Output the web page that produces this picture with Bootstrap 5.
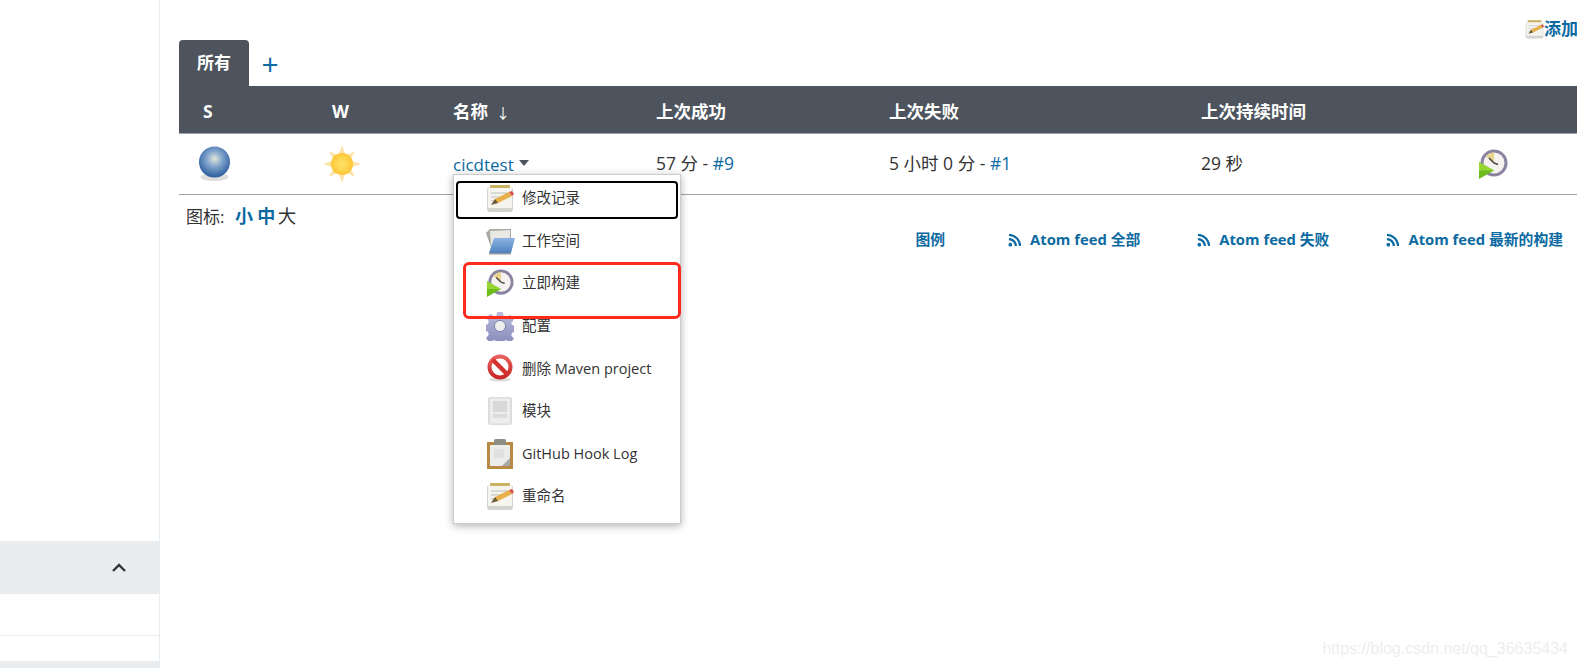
<!DOCTYPE html>
<html lang="zh-CN">
<head>
    <meta charset="UTF-8">
    <title>Jenkins</title>
    <link href="https://cdn.jsdelivr.net/npm/bootstrap@5.3.0/dist/css/bootstrap.min.css" rel="stylesheet">
    <style>
        html, body { height: 668px; overflow: hidden; }
        body { font-family: "Open Sans", "Noto Sans CJK SC", sans-serif; font-size: 17px; color: #333; background: #fff; }
        a { color: #0b6aa2; text-decoration: none; }
        .side-panel { width: 160px; height: 668px; border-right: 1px solid #e9edf0; overflow: hidden; }
        .side-gap { height: 541px; }
        .side-head { height: 53px; background: #e9edf0; padding-right: 32px; }
        .side-row { height: 42px; border-bottom: 1px solid #e9edf0; }
        .side-gap2 { height: 25px; }
        .side-head2 { height: 10px; background: #e9edf0; }
        .main-panel { width: 1417px; padding-left: 19px; position: relative; }
        .desc-row { height: 40px; margin-right: -35px; padding-top: 17px; line-height: 22px; font-weight: 700; }
        .desc-row a { white-space: nowrap; }
        .view-tabs { height: 46px; }
        .view-tab { width: 70px; background: #4d545d; color: #fff; font-weight: 700; border-radius: 4px 4px 0 0; }
        .view-add { width: 42px; font-size: 30px; font-weight: 400; line-height: 44px; padding-top: 2px; }
        .job-table { width: 1398px; table-layout: fixed; margin: 0; }
        .col-s { width: 129px; } .col-w { width: 121px; } .col-name { width: 203px; } .col-ok { width: 233px; }
        .col-fail { width: 312px; } .col-time { width: 277px; } .col-run { width: 123px; }
        .job-table th { background: #4d545d; color: #fff; height: 47px; padding: 3px 0 0 24px; vertical-align: middle; border-bottom: 1px solid #9aa5ab; font-weight: 700; font-size: 17.500px; }
        .job-table td { height: 61px; padding: 0 0 0 24px; vertical-align: middle; border-bottom: 1px solid #9aa5ab; color: #333; font-size: 17.500px; }
        .job-table td.ball-cell { padding-left: 19px; }
        .job-table td.sun-cell { padding-left: 15px; }
        .job-table td.name-cell { padding-top: 2px; font-size: 17px; }
        .sort-arrow { margin-left: 8px; font-weight: 400; font-size: 14px; color: #fff; }
        .caret-mark { display: inline-block; margin-left: 1px; vertical-align: 5px; border-top: 6px solid #4d545d; border-left: 5.500px solid transparent; border-right: 5.500px solid transparent; }
        .icon-sizes { padding: 8px 0 0 7px; line-height: 26px; height: 31px; }
        .icon-sizes a { font-size: 18px; }
        .icon-sizes a:first-child { margin-left: 6px; }
        .icon-sizes .size-plain { font-size: 18.500px; margin-left: -2px; }
        .feed-row { padding-right: 14px; gap: 57px; font-size: 14.800px; font-weight: 700; height: 26px; margin-top: 1px; }
        .feed-row a { white-space: nowrap; }
        .feed-row a:first-child { margin-right: 6px; }
        .feed-row svg { margin-right: 9px; vertical-align: -2px; }
        .job-menu { display: block; position: absolute; left: 293px; top: 174px; width: 228px; height: 350px; padding: 6px 2px 0; margin: 0; border: 1px solid #ccc; border-radius: 0; box-shadow: 0 2px 8px rgba(0,0,0,.3); font-size: 14.500px; z-index: 5; }
        .job-menu .dropdown-item { height: 38px; margin-bottom: 4.600px; padding: 0 0 4px 28px; gap: 8px; color: #333; border-radius: 4px; border: 2px solid transparent; }
        .job-menu .dropdown-item.is-focus { border-color: #000; }
        .job-menu .icon-wide { margin: 0 -1px; }
        .red-mark { position: absolute; left: 303px; top: 262px; width: 218px; height: 57px; border: 3.500px solid #ff2a1c; border-radius: 6px; z-index: 6; pointer-events: none; }
        .watermark { position: absolute; right: 9px; bottom: 7px; font-family: "Liberation Sans", sans-serif; font-size: 16px; color: #eee; z-index: 1; }
    </style>
</head>
<body>
<svg width="0" height="0" class="position-absolute">
    <defs>
        <radialGradient id="ballGrad" cx="50%" cy="40%" r="58%">
            <stop offset="0" stop-color="#e2e6da"/><stop offset=".45" stop-color="#7fa3cc"/><stop offset="1" stop-color="#2f5f9f"/>
        </radialGradient>
        <radialGradient id="sunGrad" cx="50%" cy="50%" r="50%">
            <stop offset="0" stop-color="#ffe36a"/><stop offset="1" stop-color="#fdc637"/>
        </radialGradient>
        <linearGradient id="folderGrad" x1="0" y1="0" x2="0" y2="1">
            <stop offset="0" stop-color="#8db4e2"/><stop offset="1" stop-color="#4f82c0"/>
        </linearGradient>
        <linearGradient id="gearGrad" x1="0" y1="0" x2="0" y2="1">
            <stop offset="0" stop-color="#b9bcdc"/><stop offset="1" stop-color="#8489b8"/>
        </linearGradient>
        <linearGradient id="stopGrad" x1="0" y1="0" x2="0" y2="1">
            <stop offset="0" stop-color="#e8605c"/><stop offset="1" stop-color="#c8272a"/>
        </linearGradient>
        <symbol id="i-note" viewBox="0 0 28 28">
            <rect x="1" y="3" width="26" height="25" rx="3" fill="#d4d4cf"/>
            <rect x="2" y="3" width="24" height="21" rx="1" fill="#f5f4ee"/>
            <rect x="4" y="1" width="20" height="3" fill="#c9b264"/>
            <path d="M5 9h17M5 13h12M5 17h7" stroke="#d0d0d0" stroke-width="1.300"/>
            <path d="M7 19l2-4L23 8l3 4-14 7z" fill="#e8b04a"/>
            <path d="M23 8l3 4 2-2-2-3z" fill="#d8504a"/>
            <path d="M5 21l4-6 3 4z" fill="#6b5a3a"/>
        </symbol>
        <symbol id="i-folder" viewBox="0 0 30 28">
            <path d="M1 6l4-4h21v21H7z" fill="#a9a9a4"/>
            <path d="M5 4l20-1v16H6z" fill="#e8e8e4"/>
            <path d="M9 11h21l-4 15H4z" fill="url(#folderGrad)"/>
            <path d="M4 26h22v1.500H4z" fill="#999"/>
        </symbol>
        <symbol id="i-build" viewBox="0 0 30 30">
            <circle cx="16" cy="14" r="13.500" fill="#8b83a0"/>
            <circle cx="16" cy="14" r="10.500" fill="#f4f3ef"/>
            <path d="M16 14V3.500a10.500 10.500 0 0 0-8 4z" fill="#e9d48d"/>
            <path d="M16 14L11 9M16 14l4 1.500" stroke="#444" stroke-width="1.500" fill="none"/>
            <path d="M1 13l15 8.500L1 30z" fill="#6dbb1d"/>
            <path d="M1 13l15 8.500H1z" fill="#98d733"/>
        </symbol>
        <symbol id="i-gear" viewBox="0 0 30 30">
            <path d="M12 0h6l1 5 3 1 4-3 4 5-3 4 1 2 5 1v6l-5 1-1 3 3 4-5 4-3-3-3 1-1 5h-6l-1-5-3-1-4 3-4-5 3-4-1-3-5-1v-6l5-1 1-3-3-4 5-4 4 3 2-1z" fill="url(#gearGrad)"/>
            <circle cx="15" cy="15" r="6" fill="#eceded" stroke="#777ca8" stroke-width="1"/>
        </symbol>
        <symbol id="i-stop" viewBox="0 0 28 28">
            <ellipse cx="14" cy="25.500" rx="11" ry="2" fill="#ddd"/>
            <circle cx="14" cy="13" r="10.500" fill="#fff" stroke="url(#stopGrad)" stroke-width="4"/>
            <path d="M7 6l14 14" stroke="#d5302f" stroke-width="4.500"/>
        </symbol>
        <symbol id="i-doc" viewBox="0 0 28 28">
            <rect x="2" y="0" width="24" height="28" rx="2" fill="#dcdcdc"/>
            <rect x="4" y="1.500" width="20" height="25" fill="#ededed"/>
            <rect x="7" y="4" width="14" height="11" fill="#d8d8d8"/>
            <rect x="7" y="17" width="14" height="4" fill="#dcdcdc"/>
        </symbol>
        <symbol id="i-clip" viewBox="0 0 28 30">
            <rect x="1" y="3" width="26" height="27" fill="#b98a45"/>
            <rect x="4" y="6" width="20" height="21" fill="#ececea"/>
            <path d="M24 19v8h-8z" fill="#a7a7a7"/>
            <rect x="8" y="0" width="12" height="6" rx="1.500" fill="#8f8f86"/>
            <path d="M8 10h10v9H8z" fill="#e0e0e0"/>
        </symbol>
        <symbol id="i-rss" viewBox="0 0 14 14">
            <circle cx="2.500" cy="11.500" r="2" fill="currentColor"/>
            <path d="M1 5.500a7.500 7.500 0 0 1 7.500 7.500M1 1a12 12 0 0 1 12 12" fill="none" stroke="currentColor" stroke-width="2.400"/>
        </symbol>
    </defs>
</svg>

<div class="d-flex">
    <div class="side-panel flex-shrink-0">
        <div class="side-gap"></div>
        <div class="side-head d-flex align-items-center justify-content-end">
            <svg width="16" height="11" viewBox="0 0 16 11"><path d="M2 9l6-6 6 6" fill="none" stroke="#333" stroke-width="2.400"/></svg>
        </div>
        <div class="side-row"></div>
        <div class="side-gap2"></div>
        <div class="side-head2"></div>
    </div>

    <div class="main-panel">
        <div class="desc-row d-flex justify-content-end">
            <a href="#" class="d-flex align-items-center">
                <svg width="19" height="20"><use href="#i-note"/></svg>添加描述
            </a>
        </div>
        <div class="view-tabs d-flex">
            <div class="view-tab d-flex align-items-center justify-content-center">所有</div>
            <a href="#" class="view-add text-center">+</a>
        </div>

        <table class="table job-table">
            <colgroup>
                <col class="col-s"><col class="col-w"><col class="col-name"><col class="col-ok"><col class="col-fail"><col class="col-time"><col class="col-run">
            </colgroup>
            <thead>
                <tr>
                    <th>S</th>
                    <th>W</th>
                    <th>名称<span class="sort-arrow">↓</span></th>
                    <th>上次成功</th>
                    <th>上次失败</th>
                    <th>上次持续时间</th>
                    <th></th>
                </tr>
            </thead>
            <tbody>
                <tr>
                    <td class="ball-cell">
                        <svg width="33" height="35" viewBox="0 0 33 35"><ellipse cx="16.500" cy="31" rx="14" ry="4" fill="#ddd"/><circle cx="16.500" cy="16" r="15.500" fill="url(#ballGrad)"/></svg>
                    </td>
                    <td class="sun-cell">
                        <svg width="38" height="38" viewBox="0 0 38 38">
                            <path d="M19 0l3 9h-6zM19 38l3-9h-6zM0 19l9-3v6zM38 19l-9-3v6zM6 6l8 4-4 4zM32 6l-8 4 4 4zM6 32l8-4-4-4zM32 32l-8-4 4-4z" fill="#fde3a6"/>
                            <circle cx="19" cy="19" r="11" fill="url(#sunGrad)"/>
                        </svg>
                    </td>
                    <td class="name-cell"><a href="#">cicdtest</a> <span class="caret-mark"></span></td>
                    <td>57 分 - <a href="#">#9</a></td>
                    <td>5 小时 0 分 - <a href="#">#1</a></td>
                    <td>29 秒</td>
                    <td><svg width="30" height="30"><use href="#i-build"/></svg></td>
                </tr>
            </tbody>
        </table>

        <div class="icon-sizes">图标:&nbsp;<a href="#" class="fw-bold">小</a> <a href="#" class="fw-bold">中</a> <span class="size-plain">大</span></div>
        <div class="feed-row d-flex justify-content-end align-items-center">
            <a href="#">图例</a>
            <a href="#"><svg width="13" height="13"><use href="#i-rss"/></svg>Atom feed 全部</a>
            <a href="#"><svg width="13" height="13"><use href="#i-rss"/></svg>Atom feed 失败</a>
            <a href="#"><svg width="13" height="13"><use href="#i-rss"/></svg>Atom feed 最新的构建</a>
        </div>

        <ul class="dropdown-menu job-menu list-unstyled">
            <li><a class="dropdown-item is-focus d-flex align-items-center" href="#"><svg width="28" height="28"><use href="#i-note"/></svg>修改记录</a></li>
            <li><a class="dropdown-item d-flex align-items-center" href="#"><svg class="icon-wide" width="30" height="28"><use href="#i-folder"/></svg>工作空间</a></li>
            <li><a class="dropdown-item d-flex align-items-center" href="#"><svg width="28" height="30"><use href="#i-build"/></svg>立即构建</a></li>
            <li><a class="dropdown-item d-flex align-items-center" href="#"><svg width="28" height="30"><use href="#i-gear"/></svg>配置</a></li>
            <li><a class="dropdown-item d-flex align-items-center" href="#"><svg width="28" height="28"><use href="#i-stop"/></svg>删除 Maven project</a></li>
            <li><a class="dropdown-item d-flex align-items-center" href="#"><svg width="28" height="28"><use href="#i-doc"/></svg>模块</a></li>
            <li><a class="dropdown-item d-flex align-items-center" href="#"><svg width="28" height="30"><use href="#i-clip"/></svg>GitHub Hook Log</a></li>
            <li><a class="dropdown-item d-flex align-items-center" href="#"><svg width="28" height="28"><use href="#i-note"/></svg>重命名</a></li>
        </ul>
        <div class="red-mark"></div>
        <div class="watermark">https://blog.csdn.net/qq_36635434</div>
    </div>
</div>
<script src="https://cdn.jsdelivr.net/npm/bootstrap@5.3.0/dist/js/bootstrap.bundle.min.js"></script>
</body>
</html>
